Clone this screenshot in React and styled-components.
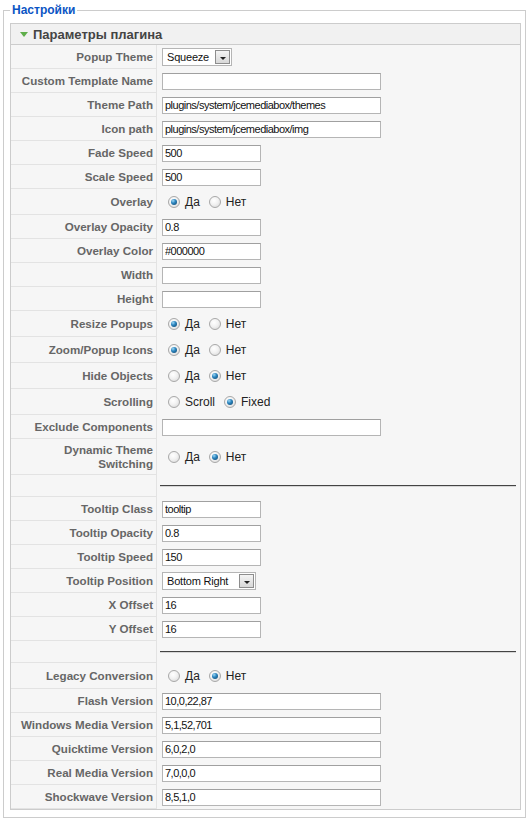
import React from "react";
import styled, { createGlobalStyle } from "styled-components";

const GlobalStyle = createGlobalStyle`
  body {
    margin: 0;
    background: #fff;
    font-family: "Liberation Sans", Arial, sans-serif;
  }
`;

const rows = [
  { label: "Popup Theme", type: "select", value: "Squeeze", w: 70 },
  { label: "Custom Template Name", type: "text", value: "", long: true },
  { label: "Theme Path", type: "text", value: "plugins/system/jcemediabox/themes", long: true },
  { label: "Icon path", type: "text", value: "plugins/system/jcemediabox/img", long: true },
  { label: "Fade Speed", type: "text", value: "500" },
  { label: "Scale Speed", type: "text", value: "500" },
  { label: "Overlay", type: "radio", options: ["Да", "Нет"], checked: 0 },
  { label: "Overlay Opacity", type: "text", value: "0.8" },
  { label: "Overlay Color", type: "text", value: "#000000" },
  { label: "Width", type: "text", value: "" },
  { label: "Height", type: "text", value: "" },
  { label: "Resize Popups", type: "radio", options: ["Да", "Нет"], checked: 0 },
  { label: "Zoom/Popup Icons", type: "radio", options: ["Да", "Нет"], checked: 0 },
  { label: "Hide Objects", type: "radio", options: ["Да", "Нет"], checked: 1 },
  { label: "Scrolling", type: "radio", options: ["Scroll", "Fixed"], checked: 1 },
  { label: "Exclude Components", type: "text", value: "", long: true },
  { label: ["Dynamic Theme", "Switching"], type: "radio", options: ["Да", "Нет"], checked: 1, tall: true },
  { type: "spacer" },
  { label: "Tooltip Class", type: "text", value: "tooltip" },
  { label: "Tooltip Opacity", type: "text", value: "0.8" },
  { label: "Tooltip Speed", type: "text", value: "150" },
  { label: "Tooltip Position", type: "select", value: "Bottom Right", w: 94 },
  { label: "X Offset", type: "text", value: "16" },
  { label: "Y Offset", type: "text", value: "16" },
  { type: "spacer" },
  { label: "Legacy Conversion", type: "radio", options: ["Да", "Нет"], checked: 1 },
  { label: "Flash Version", type: "text", value: "10,0,22,87", long: true },
  { label: "Windows Media Version", type: "text", value: "5,1,52,701", long: true },
  { label: "Quicktime Version", type: "text", value: "6,0,2,0", long: true },
  { label: "Real Media Version", type: "text", value: "7,0,0,0", long: true },
  { label: "Shockwave Version", type: "text", value: "8,5,1,0", long: true },
];

const Fieldset = styled.fieldset`
  margin: 2px 4px 0 3px;
  padding: 5px 4px 7px 6px;
  border: 1px solid #ccc;
`;

const Legend = styled.legend`
  padding: 0 2px;
  color: #0b55c4;
  font-size: 12px;
  font-weight: bold;
  line-height: 16px;
`;

const Panel = styled.div`
  border: 1px solid #ccc;
  background: #f6f6f6;
`;

const PanelHeader = styled.div`
  display: flex;
  align-items: center;
  gap: 5px;
  height: 20px;
  padding-left: 9px;
  background: #f1f1f1;
  border-bottom: 1px solid #ccc;
  color: #444;
  font-size: 13px;
  font-weight: bold;
`;

const Arrow = styled.span`
  width: 0;
  height: 0;
  border-left: 4px solid transparent;
  border-right: 4px solid transparent;
  border-top: 5px solid #5fae4a;
  margin-top: 1px;
`;

const Row = styled.div`
  display: flex;
  height: ${(p) => p.$h}px;
`;

const Label = styled.div`
  box-sizing: border-box;
  width: 146px;
  flex-shrink: 0;
  display: flex;
  flex-direction: column;
  justify-content: center;
  align-items: flex-end;
  padding: 0 3px 0 6px;
  border-right: 1px solid #e3e3e3;
  border-bottom: 1px solid #e3e3e3;
  color: #666;
  font-size: 11.6px;
  font-weight: bold;
  line-height: 14px;
  text-align: right;
  white-space: nowrap;
`;

const Value = styled.div`
  flex: 1;
  display: flex;
  align-items: center;
  padding-left: ${(p) => p.$pad ?? 5}px;
  padding-right: ${(p) => p.$padRight ?? 0}px;
`;

const TextInput = styled.input`
  box-sizing: border-box;
  width: ${(p) => (p.$long ? 219 : 99)}px;
  height: 17px;
  margin: 0;
  padding: 0 2px;
  border: 1px solid #b5b5b5;
  border-top-color: #a0a0a0;
  background: #fff;
  color: #111;
  font-family: "Liberation Sans", Arial, sans-serif;
  font-size: 11px;
  letter-spacing: -0.5px;
  outline: none;
`;

const SelectBox = styled.div`
  box-sizing: border-box;
  display: flex;
  align-items: center;
  justify-content: space-between;
  width: ${(p) => p.$w}px;
  height: 18px;
  padding: 0 1px 0 4px;
  border: 1px solid #b5b5b5;
  background: #fff;
  color: #111;
  font-size: 11px;
  letter-spacing: -0.2px;
`;

const SelectButton = styled.span`
  box-sizing: border-box;
  display: flex;
  align-items: center;
  justify-content: center;
  width: 15px;
  height: 14px;
  border: 1px solid #8d8d8d;
  background: linear-gradient(#f4f4f4, #d8d8d8);

  &::after {
    content: "";
    border-left: 3px solid transparent;
    border-right: 3px solid transparent;
    border-top: 3px solid #222;
    margin-top: 2px;
  }
`;

const RadioGroup = styled.div`
  display: flex;
  align-items: center;
  padding-left: 6px;
  color: #222;
  font-size: 12px;
`;

const RadioItem = styled.label`
  display: flex;
  align-items: center;
  gap: 5px;
  margin-right: 9px;
`;

const RadioDot = styled.span`
  box-sizing: border-box;
  position: relative;
  width: 12px;
  height: 12px;
  border-radius: 50%;
  border: 1px solid #a8a8a8;
  background: radial-gradient(circle at 40% 35%, #fff 0%, #f2f2f2 45%, #d4d4d4 100%);

  &::after {
    content: "";
    display: ${(p) => (p.$on ? "block" : "none")};
    position: absolute;
    left: 2px;
    top: 2px;
    width: 6px;
    height: 6px;
    border-radius: 50%;
    background: radial-gradient(circle at 35% 30%, #9fd8f5 0%, #2c86c0 40%, #0b3f66 100%);
  }
`;

const Separator = styled.div`
  flex: 1;
  border-top: 1px solid #444;
  border-bottom: 1px solid #d6d6d6;
`;

function Field({ row }) {
  if (row.type === "text") return <TextInput $long={row.long} defaultValue={row.value} />;
  if (row.type === "select")
    return (
      <SelectBox $w={row.w}>
        <span>{row.value}</span>
        <SelectButton />
      </SelectBox>
    );
  return (
    <RadioGroup>
      {row.options.map((o, i) => (
        <RadioItem key={o}>
          <RadioDot $on={i === row.checked} />
          {o}
        </RadioItem>
      ))}
    </RadioGroup>
  );
}

const App = () => {
  return (
    <>
      <GlobalStyle />
      <Fieldset>
        <Legend>Настройки</Legend>
        <Panel>
          <PanelHeader>
            <Arrow />
            Параметры плагина
          </PanelHeader>
          {rows.map((row, i) => {
            if (row.type === "spacer")
              return (
                <Row key={i} $h={22}>
                  <Label />
                  <Value $pad={3} $padRight={4}>
                    <Separator />
                  </Value>
                </Row>
              );
            const h = row.tall ? 36 : row.type === "radio" ? 26 : 24;
            return (
              <Row key={i} $h={h}>
                <Label>
                  {Array.isArray(row.label)
                    ? row.label.map((l) => <span key={l}>{l}</span>)
                    : row.label}
                </Label>
                <Value>
                  <Field row={row} />
                </Value>
              </Row>
            );
          })}
        </Panel>
      </Fieldset>
    </>
  );
};

export default App;
